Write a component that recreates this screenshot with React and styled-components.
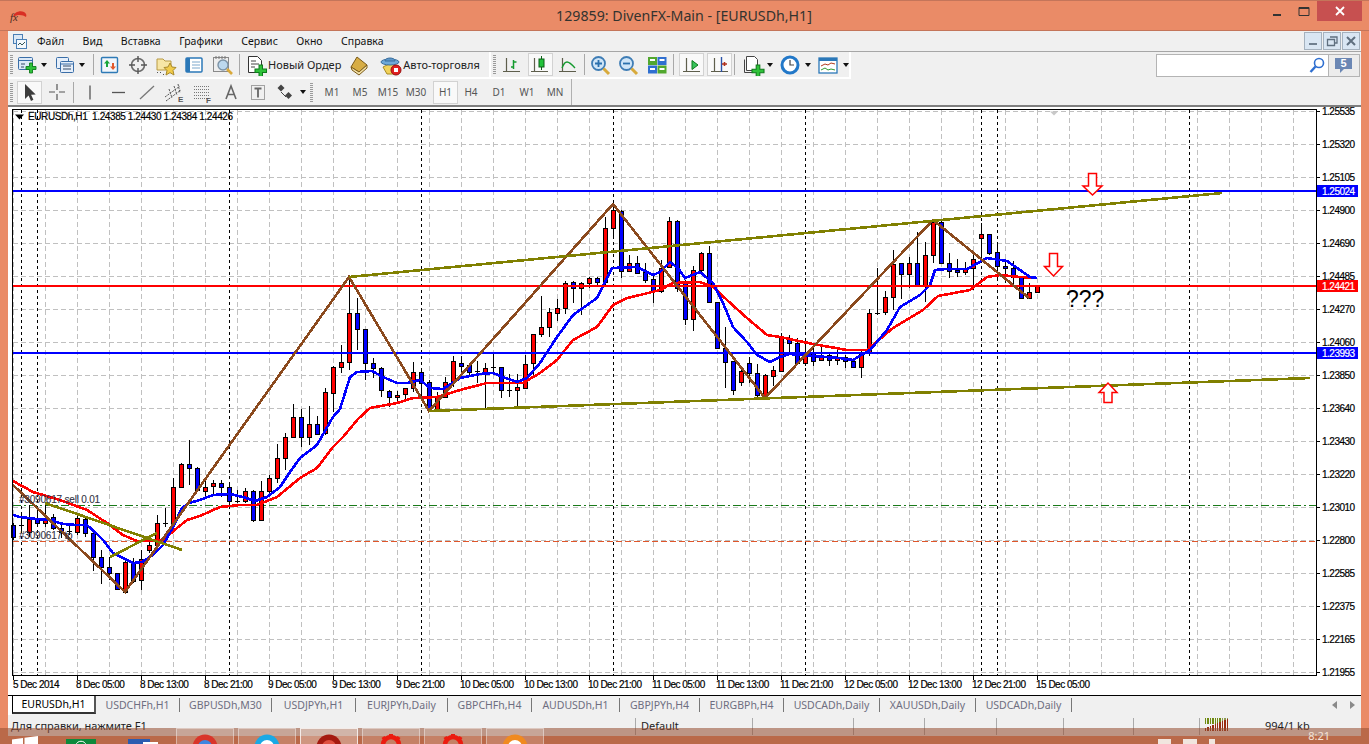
import React from "react";
import styled, { createGlobalStyle } from "styled-components";

const Global = createGlobalStyle`
  html, body { margin: 0; padding: 0; overflow: hidden; background: #ea8b67; }
  * { box-sizing: border-box; }
`;

const uiFont = `"Noto Sans", "Liberation Sans", sans-serif`;
const chartFont = `"Liberation Sans", Arial, sans-serif`;

// x, colour, body top, body bottom, high, low
const candles = [
  [13, "b", 525, 537, 523, 540], [21, "d", 525, 525, 515, 530], [29, "r", 519, 532, 505, 537], [37, "b", 519, 523, 510, 527],
  [45, "r", 518, 523, 503, 527], [53, "b", 517, 528, 514, 530], [61, "b", 528, 532, 522, 538], [69, "d", 531, 531, 525, 535],
  [77, "r", 518, 532, 515, 535], [85, "b", 519, 533, 516, 537], [93, "b", 533, 557, 530, 571], [101, "b", 557, 567, 550, 584],
  [109, "b", 567, 573, 557, 580], [117, "b", 573, 589, 573, 590], [125, "r", 562, 592, 560, 592], [133, "b", 562, 581, 558, 583],
  [141, "r", 559, 580, 550, 590], [149, "r", 545, 550, 540, 553], [157, "r", 523, 545, 515, 550], [165, "d", 523, 523, 508, 527],
  [173, "r", 487, 523, 478, 525], [181, "r", 464, 487, 463, 488], [189, "b", 464, 468, 440, 485], [197, "b", 468, 490, 467, 491],
  [205, "r", 487, 491, 480, 498], [213, "r", 483, 486, 480, 495], [221, "b", 483, 487, 480, 497], [229, "b", 487, 501, 485, 507],
  [237, "d", 501, 501, 490, 503], [245, "r", 491, 501, 488, 503], [253, "b", 491, 520, 490, 522], [261, "r", 491, 520, 481, 520],
  [269, "r", 478, 491, 475, 493], [277, "r", 458, 478, 444, 483], [285, "r", 437, 458, 433, 470], [293, "r", 417, 437, 404, 438],
  [301, "b", 417, 437, 409, 447], [309, "r", 424, 437, 406, 445], [317, "b", 424, 434, 416, 435], [325, "r", 392, 433, 388, 435],
  [333, "r", 367, 393, 366, 412], [341, "r", 362, 367, 345, 373], [349, "r", 313, 362, 277, 370], [357, "b", 313, 329, 298, 350],
  [365, "b", 329, 363, 329, 380], [373, "b", 363, 368, 358, 378], [381, "b", 368, 390, 367, 397], [389, "b", 391, 397, 390, 407],
  [397, "r", 395, 397, 391, 403], [405, "r", 388, 394, 388, 400], [413, "r", 372, 388, 362, 392], [421, "b", 372, 383, 368, 400],
  [429, "b", 382, 409, 380, 410], [437, "r", 396, 409, 392, 410], [445, "r", 382, 397, 377, 398], [453, "r", 361, 382, 356, 387],
  [461, "b", 363, 366, 356, 375], [469, "b", 365, 372, 363, 375], [477, "d", 371, 371, 361, 383], [485, "r", 368, 372, 363, 408],
  [493, "d", 367, 367, 354, 375], [501, "b", 367, 390, 367, 398], [509, "d", 390, 390, 374, 397], [517, "r", 387, 390, 374, 407],
  [525, "r", 364, 388, 355, 388], [533, "r", 334, 363, 334, 377], [541, "r", 327, 334, 296, 337], [549, "r", 312, 327, 308, 337],
  [557, "r", 308, 313, 299, 321], [565, "r", 283, 308, 281, 314], [573, "b", 282, 288, 281, 303], [581, "r", 283, 288, 282, 315],
  [589, "r", 278, 283, 277, 288], [597, "b", 278, 282, 277, 285], [605, "r", 228, 282, 217, 287], [613, "r", 210, 228, 205, 238],
  [621, "b", 211, 271, 210, 278], [629, "r", 263, 271, 255, 272], [637, "b", 263, 273, 256, 274], [645, "b", 272, 280, 263, 283],
  [653, "b", 279, 291, 275, 303], [661, "r", 268, 291, 260, 293], [669, "r", 221, 267, 217, 268], [677, "b", 221, 288, 220, 292],
  [685, "b", 283, 319, 280, 325], [693, "r", 270, 319, 266, 331], [701, "r", 253, 270, 252, 272], [709, "b", 253, 302, 246, 303],
  [717, "b", 302, 348, 302, 348], [725, "b", 348, 362, 327, 388], [733, "b", 361, 390, 361, 395], [741, "r", 371, 382, 370, 386],
  [749, "b", 363, 373, 357, 383], [757, "b", 373, 395, 364, 397], [765, "r", 375, 397, 374, 397], [773, "r", 370, 376, 366, 386],
  [781, "r", 337, 371, 333, 372], [789, "b", 339, 343, 335, 353], [797, "b", 343, 363, 338, 365], [805, "r", 353, 363, 343, 366],
  [813, "b", 353, 361, 347, 366], [821, "r", 357, 360, 347, 361], [829, "b", 355, 360, 354, 366], [837, "r", 357, 360, 350, 365],
  [845, "b", 357, 361, 355, 368], [853, "b", 361, 367, 358, 368], [861, "r", 353, 367, 350, 378], [869, "r", 313, 352, 309, 356],
  [877, "d", 313, 313, 268, 315], [885, "r", 297, 312, 291, 315], [893, "r", 264, 297, 250, 310], [901, "b", 263, 274, 263, 299],
  [909, "r", 263, 274, 257, 288], [917, "b", 263, 285, 232, 285], [925, "r", 255, 285, 242, 302], [933, "r", 222, 255, 220, 263],
  [941, "b", 222, 263, 221, 263], [949, "b", 263, 271, 253, 278], [957, "b", 270, 272, 259, 277], [965, "r", 268, 272, 262, 275],
  [973, "r", 259, 268, 253, 290], [981, "r", 234, 238, 223, 259], [989, "b", 234, 253, 234, 255], [997, "b", 252, 266, 245, 278],
  [1005, "b", 266, 268, 260, 283], [1013, "b", 268, 277, 261, 285], [1021, "b", 277, 298, 277, 298], [1029, "r", 292, 298, 283, 299],
  [1037, "r", 286, 292, 285, 293],
];

const blueMa = "13,515 20,517 37,519 50,520 63,524 77,525 87,525 97,534 103,540 113,553 123,558 133,563 142,562 153,555 163,545 173,527 182,508 189,503 200,500 213,495 230,494 243,497 255,501 267,497 280,487 290,472 300,458 317,445 333,417 340,409 350,377 357,372 372,371 383,377 397,383 407,383 420,380 430,388 443,389 460,378 480,374 493,373 503,377 517,382 527,378 540,363 557,337 573,315 597,298 612,268 637,267 653,275 660,272 670,262 678,268 685,278 700,272 713,283 723,303 733,327 747,342 757,355 770,362 780,357 790,354 813,356 840,358 853,360 870,350 887,330 900,307 920,295 930,285 935,270 947,269 967,269 987,258 1007,261 1020,270 1030,277 1037,278";
const redMa = "13,481 33,492 60,500 87,510 107,523 123,535 137,541 163,540 177,528 187,520 200,516 220,507 240,505 257,505 277,497 300,478 317,468 333,447 343,437 358,419 370,408 397,403 413,398 437,397 460,390 487,383 523,383 540,373 557,360 573,340 597,327 613,305 627,298 640,295 660,290 673,283 700,282 713,287 727,300 747,318 767,335 780,337 813,344 847,350 867,350 893,328 923,310 938,296 970,290 987,277 1000,275 1020,277 1037,278";
const zigzag = "13,485 125,592 349,277 429,411 613,204 765,398 933,220 1029,298";

const priceLabels = ["1.25535", "1.25320", "1.25105", "1.24900", "1.24690", "1.24485", "1.24270", "1.24060", "1.23850", "1.23640", "1.23430", "1.23220", "1.23010", "1.22800", "1.22585", "1.22375", "1.22165", "1.21955"];
const timeLabels = ["8 Dec 05:00", "8 Dec 13:00", "8 Dec 21:00", "9 Dec 05:00", "9 Dec 13:00", "9 Dec 21:00", "10 Dec 05:00", "10 Dec 13:00", "10 Dec 21:00", "11 Dec 05:00", "11 Dec 13:00", "11 Dec 21:00", "12 Dec 05:00", "12 Dec 13:00", "12 Dec 21:00", "15 Dec 05:00"];
const dayLines = [21, 37, 229, 421, 613, 805, 981, 997, 1189];
const gridX = Array.from({ length: 41 }, (_, i) => 13 + i * 32);

const tabs = [
  ["EURUSDh,H1", 84], ["USDCHFh,H1", 84], ["GBPUSDh,M30", 92], ["USDJPYh,H1", 84], ["EURJPYh,Daily", 92], ["GBPCHFh,H4", 84],
  ["AUDUSDh,H1", 88], ["GBPJPYh,H4", 80], ["EURGBPh,H4", 84], ["USDCADh,Daily", 96], ["XAUUSDh,Daily", 96], ["USDCADh,Daily", 96],
];
const menus = ["Файл", "Вид", "Вставка", "Графики", "Сервис", "Окно", "Справка"];
const frames = [["M1", 28], ["M5", 28], ["M15", 28], ["M30", 28], ["H1", 25, true], ["H4", 28], ["D1", 28], ["W1", 28], ["MN", 28]];

const Page = styled.div`
  position: relative;
  width: 1369px;
  height: 744px;
  overflow: hidden;
  background: #ea8b67;
  border-top: 1px solid #c4755a;
  font-family: ${uiFont};
`;

const TitleBar = styled.header`
  position: relative;
  display: flex;
  align-items: center;
  justify-content: center;
  height: 30px;
  border-bottom: 1px solid #c4755a;
`;

const AppLogo = styled.svg`
  position: absolute;
  left: 9px;
  top: 9px;
`;

const Title = styled.span`
  font-size: 14.2px;
  color: #33332f;
  margin-left: -1px;
`;

const WinControls = styled.div`
  position: absolute;
  right: 7px;
  top: 0;
  display: flex;
  height: 20px;
`;

const WinButton = styled.div`
  display: flex;
  align-items: center;
  justify-content: center;
  width: ${(p) => p.$w}px;
  height: 20px;
  background: ${(p) => (p.$close ? "#c75050" : "transparent")};
`;

const Window = styled.div`
  display: flex;
  flex-direction: column;
  width: 1353px;
  height: 705px;
  margin-left: 8px;
  background: #f0f0f0;
`;

const MenuBar = styled.nav`
  display: flex;
  align-items: center;
  height: 21px;
  padding: 0 1px 0 5px;
  border-bottom: 1px solid #a6a6a6;
`;

const MenuItems = styled.div`
  display: flex;
  gap: 18.5px;
  margin-left: 10px;
`;

const MenuItem = styled.span`
  font-size: 10.5px;
  color: #111;
`;

const MdiButtons = styled.div`
  display: flex;
  gap: 1px;
  margin-left: auto;
`;

const MdiButton = styled.div`
  display: flex;
  align-items: center;
  justify-content: center;
  width: 18px;
  height: 18px;
  background: #d9e6f3;
  border: 1px solid #a4b1be;
`;

const ToolRow = styled.div`
  display: flex;
  align-items: center;
  height: ${(p) => p.$h}px;
`;

const Band = styled.div`
  display: flex;
  align-items: center;
  height: 100%;
  padding-left: 2px;
  border-right: ${(p) => (p.$line ? "1px solid #b0b0b0" : "2px solid #fff")};
  border-bottom: ${(p) => (p.$line ? "none" : "2px solid #fff")};
  width: ${(p) => p.$w}px;
`;

const Grip = styled.i`
  display: block;
  flex: none;
  width: 3px;
  height: 19px;
  margin: 0 ${(p) => p.$mr ?? 2}px 0 ${(p) => p.$ml ?? 0}px;
  background: repeating-linear-gradient(to bottom, #9a9a9a 0 1px, transparent 1px 2px);
`;

const Slot = styled.div`
  display: flex;
  flex: none;
  align-items: center;
  justify-content: center;
  width: ${(p) => p.$w ?? 28}px;
  height: ${(p) => (p.$on ? 23 : 24)}px;
  margin-left: ${(p) => p.$ml ?? 0}px;
  margin-right: ${(p) => p.$mr ?? 0}px;
  ${(p) => p.$on && "background: #f9f9f9; border: 1px solid #d2d2d2;"}
`;

const Caret = styled.i`
  display: block;
  flex: none;
  width: 0;
  height: 0;
  margin: 0 1px 0 2px;
  border-left: 3.5px solid transparent;
  border-right: 3.5px solid transparent;
  border-top: 4px solid #111;
`;

const Sep = styled.i`
  display: block;
  flex: none;
  width: 1px;
  height: 21px;
  margin: 0 ${(p) => p.$mr ?? 2}px 0 ${(p) => p.$ml ?? 2}px;
  background: #a8a8a8;
`;

const ToolText = styled.span`
  flex: none;
  font-size: 11px;
  color: #222;
  margin-right: ${(p) => p.$mr ?? 0}px;
`;

const Frame = styled.span`
  font-size: 10px;
  color: #555;
`;

const SearchBox = styled.div`
  display: flex;
  align-items: center;
  justify-content: flex-end;
  width: 173px;
  height: 23px;
  margin-left: auto;
  padding-right: 3px;
  background: #fff;
  border: 1px solid #b4b4b4;
`;

const ChatButton = styled.div`
  display: flex;
  align-items: center;
  justify-content: center;
  width: 31px;
  height: 23px;
  margin-right: 1px;
  background: #ececec;
  border: 1px solid #b4b4b4;
  border-left: none;
`;

const ChartWrap = styled.div`
  height: 590px;
  background: #fff;
  border-top: 2px solid #7e7e7e;
`;

const Chart = styled.svg`
  display: block;
`;

const AxisText = styled.text`
  font-family: ${chartFont};
  font-size: 10px;
  letter-spacing: -0.5px;
  fill: #000;
  stroke: #000;
  stroke-width: 0.2px;
  white-space: pre;
`;

const InfoText = styled(AxisText)`
  letter-spacing: -0.4px;
`;

const TagText = styled(AxisText)`
  fill: #fff;
  stroke: #fff;
`;

const OrderText = styled(AxisText)`
  letter-spacing: -0.2px;
  fill: #334;
  stroke: #334;
  stroke-width: 0.1px;
`;

const BigText = styled.text`
  font-family: ${chartFont};
  font-size: 23px;
  fill: #000;
`;

const TabStrip = styled.div`
  position: relative;
  display: flex;
  height: 20px;
  padding-left: 4px;
  border-top: 1px solid #000;
  background: #f0f0f0;
  box-shadow: inset 4px 0 0 #fff;
`;

const Tab = styled.div`
  display: flex;
  flex: none;
  align-items: center;
  justify-content: center;
  width: ${(p) => p.$w}px;
  height: ${(p) => (p.$on ? "18px" : "14px")};
  margin-top: ${(p) => (p.$on ? 0 : 2)}px;
  font-size: 10.5px;
  color: ${(p) => (p.$on ? "#000" : "#6e6e80")};
  background: ${(p) => (p.$on ? "#fff" : "transparent")};
  border-left: ${(p) => (p.$on ? "1px solid #000" : "none")};
  border-right: ${(p) => (p.$on ? "2px solid #555" : "1px solid #777")};
  border-bottom: ${(p) => (p.$on ? "2px solid #333" : "none")};
`;

const TabArrows = styled.div`
  display: flex;
  gap: 11px;
  margin-left: auto;
  padding: 5px 6px 0 0;
`;

const StatusBar = styled.footer`
  position: relative;
  display: flex;
  height: 21px;
  padding-top: 3px;
  font-size: 11px;
  color: #222;
`;

const StatusCell = styled.div`
  flex: none;
  width: ${(p) => p.$w}px;
  height: 17px;
  padding-left: ${(p) => p.$pad ?? 0}px;
  border-left: ${(p) => (p.$first ? "none" : "1px solid #aaa")};
  white-space: nowrap;
`;

const Taskbar = styled.div`
  position: absolute;
  left: 0;
  right: 0;
  bottom: 0;
  display: flex;
  height: 16px;
  overflow: hidden;
  background: rgba(149, 80, 51, 0.57);
`;

const TaskIcon = styled.div`
  flex: none;
  width: ${(p) => p.$w}px;
  padding-top: ${(p) => p.$top ?? 0}px;
  margin-left: ${(p) => p.$ml}px;
`;

const TaskButton = styled.div`
  display: flex;
  flex: none;
  justify-content: center;
  width: 58px;
  height: 18px;
  margin-left: ${(p) => p.$ml ?? 4}px;
  padding-top: 5px;
  background: ${(p) => (p.$on ? "rgba(255,255,255,0.3)" : "rgba(255,255,255,0.16)")};
  border: 1px solid ${(p) => (p.$on ? "rgba(255,255,255,0.75)" : "rgba(255,255,255,0.4)")};
`;

const Clock = styled.span`
  position: absolute;
  right: 39px;
  top: 0;
  font-size: 11px;
  line-height: 15px;
  color: #f4e3d8;
`;

const Tray = styled.div`
  position: absolute;
  left: 1158px;
  top: 11px;
  display: flex;
  gap: 12px;
`;

const TrayDot = styled.i`
  display: block;
  width: ${(p) => p.$w}px;
  height: 6px;
  background: #f1e6df;
`;

// --- toolbar drawings

const Ico = ({ w = 22, h = 22, children }) => (
  <svg width={w} height={h} viewBox={`0 0 ${w} ${h}`}>
    {children}
  </svg>
);

const GreenPlus = ({ x, y, s = 1 }) => (
  <path
    transform={`translate(${x} ${y}) scale(${s})`}
    d="M3.5 0h3v3.5H10v3H6.5V10h-3V6.5H0v-3h3.5z"
    fill="#2fc23a"
    stroke="#0f7a1c"
    strokeWidth="0.9"
  />
);

const NewChartIcon = () => (
  <Ico>
    <rect x="2.5" y="3.5" width="14" height="12" rx="1" fill="#dce9f7" stroke="#3a6ea8" />
    <path d="M2.5 6.5h14" stroke="#3a6ea8" />
    <path d="M5 10h4M5 13h3" stroke="#354a66" />
    <GreenPlus x={10} y={9} />
  </Ico>
);

const ProfilesIcon = () => (
  <Ico>
    <rect x="2.5" y="3.5" width="12" height="11" rx="1" fill="#e6effa" stroke="#3a6ea8" />
    <rect x="6.5" y="7.5" width="13" height="11" rx="1" fill="#e6effa" stroke="#3a6ea8" />
    <path d="M9 12h8M9 15h8" stroke="#354a66" />
    <path d="M6.5 10h13" stroke="#3a6ea8" />
  </Ico>
);

const WatchIcon = () => (
  <Ico>
    <rect x="2.5" y="3.5" width="16" height="15" rx="1" fill="#f1f6fb" stroke="#2e7ab6" strokeWidth="1.4" />
    <path d="M8 6l-3 3.5h2V13h2V9.5h2z" fill="#17a63a" />
    <path d="M13 16l3-3.5h-2V9h-2v3.5h-2z" transform="translate(1 0)" fill="#e2592c" />
  </Ico>
);

const TargetIcon = () => (
  <Ico>
    <circle cx="11" cy="11" r="6.5" fill="none" stroke="#6b6b6b" strokeWidth="1.6" />
    <path d="M11 2v6M11 14v6M2 11h6M14 11h6" stroke="#555" strokeWidth="1.4" />
  </Ico>
);

const FavIcon = () => (
  <Ico w={24}>
    <path d="M3 5h6l2 2h6v9H3z" fill="#f7e6a5" stroke="#b89a45" />
    <path d="M16 9l2 4 4 .5-3 3 1 4.5-4-2.4-4 2.4 1-4.5-3-3 4-.5z" fill="#f1cb4a" stroke="#a98a2a" />
    <path d="M3 18.5h1M6 18.5h1M9 20.5h1" stroke="#555" />
  </Ico>
);

const TerminalIcon = () => (
  <Ico>
    <rect x="3" y="4" width="16" height="14" rx="1" fill="#fff" stroke="#2b78b8" strokeWidth="1.5" />
    <rect x="3" y="4" width="4" height="14" fill="#2b78b8" />
    <path d="M9 8h8M9 11h8M9 14h8" stroke="#7ba7cc" />
  </Ico>
);

const TesterIcon = () => (
  <Ico w={24}>
    <rect x="2.5" y="3.5" width="15" height="14" fill="#eeeeee" stroke="#8a8a8a" />
    <path d="M5 2v3M8 2v3M11 2v3M14 2v3" stroke="#777" />
    <circle cx="12" cy="11" r="5" fill="#bcd8ee" stroke="#7d93a6" strokeWidth="1.4" />
    <path d="M16 15l5 5" stroke="#d9a93a" strokeWidth="2.6" />
  </Ico>
);

const OrderIcon = () => (
  <Ico w={24}>
    <path d="M4.5 2.5h9l4 4v12h-13z" fill="#fff" stroke="#333" />
    <path d="M7 7h5M7 10h8M7 13h4" stroke="#444" />
    <GreenPlus x={11} y={11} s={1.15} />
  </Ico>
);

const BookIcon = () => (
  <Ico>
    <path d="M9 3l10 8-8 7-8-5z" fill="#d7ad45" stroke="#7b5b1a" />
    <path d="M3 13l1 3 7 5 8-7v-3l-8 7z" fill="#f4e2a8" stroke="#7b5b1a" />
  </Ico>
);

const AutoIcon = () => (
  <Ico w={24}>
    <path d="M4 13l8 -4 7 4v7H8z" fill="#f2d25a" stroke="#a78a22" />
    <ellipse cx="11" cy="8" rx="9" ry="3" fill="#6fa9d8" stroke="#3b6f9e" />
    <path d="M6 7c0-4 10-4 10 0z" fill="#5d97c9" stroke="#3b6f9e" />
    <circle cx="17" cy="16" r="5" fill="#e02020" stroke="#9a1010" />
    <rect x="15" y="14" width="4" height="4" fill="#fff" />
  </Ico>
);

const Axes = () => <path d="M5.5 4v14M2 17.5h17" stroke="#5e5e4c" strokeWidth="1.2" fill="none" />;

const BarsIcon = () => (
  <Ico>
    <Axes />
    <path d="M12.5 6v9M10 13h2.5M12.5 8h3" stroke="#139a2e" strokeWidth="1.5" fill="none" />
  </Ico>
);

const CandleIcon = () => (
  <Ico>
    <Axes />
    <path d="M12.5 2v14" stroke="#0b5f16" />
    <rect x="10" y="5" width="5" height="8" fill="#21c23a" stroke="#0b5f16" />
  </Ico>
);

const LineIcon = () => (
  <Ico>
    <Axes />
    <path d="M5 14c3-8 6-8 13 0" stroke="#139a2e" strokeWidth="1.3" fill="none" />
  </Ico>
);

const ZoomIcon = ({ plus }) => (
  <Ico w={24}>
    <circle cx="9.5" cy="9.5" r="6.5" fill="#cfe5f7" stroke="#3f7db5" strokeWidth="1.8" />
    <path d={plus ? "M6 9.5h7M9.5 6v7" : "M6 9.5h7"} stroke="#2a70ad" strokeWidth="1.8" />
    <path d="M14.5 14.5l5.5 5.5" stroke="#d8aa3c" strokeWidth="3" />
  </Ico>
);

const TileIcon = () => (
  <Ico w={24}>
    <rect x="3" y="3" width="9" height="8" fill="#52a82f" />
    <rect x="12.5" y="3" width="9" height="8" fill="#2f6fd0" />
    <rect x="3" y="11.5" width="9" height="8" fill="#2f6fd0" />
    <rect x="12.5" y="11.5" width="9" height="8" fill="#52a82f" />
    <path d="M5 6h5M14.5 6h5M5 15h5M14.5 15h5" stroke="#fff" strokeWidth="2" />
  </Ico>
);

const ScrollIcon = () => (
  <Ico>
    <Axes />
    <path d="M11 6.5l6 4.5-6 4.5z" fill="#37c35a" stroke="#0f7a1c" />
  </Ico>
);

const ShiftIcon = () => (
  <Ico>
    <Axes />
    <path d="M12.5 3v15" stroke="#2a52a8" strokeWidth="1.4" />
    <path d="M13 10h5M15.5 8v4" stroke="#b0301c" strokeWidth="1.6" />
  </Ico>
);

const AddPeriodIcon = () => (
  <Ico w={24}>
    <path d="M5.5 2.5h8l3 3v11h-11z" fill="#fff" stroke="#444" />
    <path d="M3.5 5.5v13h9" fill="none" stroke="#444" />
    <GreenPlus x={11} y={11} s={1.2} />
  </Ico>
);

const ClockIcon = () => (
  <Ico w={24}>
    <circle cx="11" cy="11" r="8" fill="#fff" stroke="#2278c8" strokeWidth="3" />
    <path d="M11 6v5h4" stroke="#444" strokeWidth="1.2" fill="none" />
  </Ico>
);

const TemplateIcon = () => (
  <Ico w={24}>
    <rect x="2" y="4" width="18" height="15" fill="#fff" stroke="#2b78b8" strokeWidth="1.3" />
    <rect x="2" y="4" width="18" height="3" fill="#2b78b8" />
    <path d="M4 12l4-2 3 1 3-2 4 1" stroke="#b03a1c" fill="none" />
    <path d="M4 16l4-2 3 2 3-1 4 1" stroke="#2f9a2f" fill="none" />
  </Ico>
);

const CursorIcon = () => (
  <Ico>
    <path d="M6 3v15l3.6-3.4L12 20l2.4-1.2-2.3-5 4.6-.3z" fill="#3c3c3c" />
  </Ico>
);

const CrossIcon = () => (
  <Ico>
    <path d="M11 3v6M11 13v6M3 11h6M13 11h6" stroke="#555" strokeWidth="1.2" />
  </Ico>
);

const VLineIcon = () => (
  <Ico>
    <path d="M11 4.5v14" stroke="#555" strokeWidth="1.3" />
  </Ico>
);

const HLineIcon = () => (
  <Ico>
    <path d="M4 11.5h13" stroke="#555" strokeWidth="1.3" />
  </Ico>
);

const TrendIcon = () => (
  <Ico>
    <path d="M4 18L18 5" stroke="#777" strokeWidth="1.3" />
  </Ico>
);

const Mini = styled.text`
  font-family: ${chartFont};
  font-size: 8px;
  font-weight: 700;
  fill: #555;
`;

const ChannelIcon = () => (
  <Ico w={24} h={24}>
    <path d="M2 17L17 6M3 21L18 10M6 9l3 9M11 6l3 9M15 4l2 9" stroke="#555" strokeWidth="1" strokeDasharray="2 1" />
    <Mini x="15" y="22">E</Mini>
  </Ico>
);

const FiboIcon = () => (
  <Ico w={24} h={24}>
    <path d="M3 6.5h15M3 9.5h15M3 12.5h15M3 15.5h15M3 18.5h15" stroke="#777" strokeDasharray="1 1" />
    <Mini x="15" y="23">F</Mini>
  </Ico>
);

const TextIcon = () => (
  <Ico>
    <path d="M6 18L11 5l5 13M8 13.5h6" stroke="#666" strokeWidth="1.6" fill="none" />
  </Ico>
);

const LabelIcon = () => (
  <Ico>
    <rect x="4.5" y="4.5" width="13" height="14" fill="none" stroke="#555" strokeDasharray="1 1" />
    <path d="M7.5 7.5h7M11 7.5v9" stroke="#666" strokeWidth="1.8" />
  </Ico>
);

const ArrowsIcon = () => (
  <Ico>
    <path d="M7 3.5l3.5 3.5-3.5 3.5L3.5 7z" fill="#444" />
    <path d="M14.5 11l3.5 3.5-3.5 3.5-3.5-3.5z" fill="#444" />
    <path d="M7 11l5 5" stroke="#444" />
  </Ico>
);

const WinLogo = () => (
  <svg width="26" height="14" viewBox="0 0 26 14">
    <path d="M0 3.5L11 2v12H0zM12.5 1.8L26 0v14H12.5z" fill="#fff" />
  </svg>
);

const GearIcon = () => (
  <svg width="22" height="14" viewBox="0 0 22 14">
    <circle cx="11" cy="11" r="8" fill="none" stroke="#ec1c10" strokeWidth="4.5" />
    <path d="M9 0h4v4H9zM1.5 4l3-2 2.5 3-3 2zM20.5 4l-3-2-2.5 3 3 2z" fill="#ec1c10" />
  </svg>
);

const OrbIcon = ({ a, b }) => (
  <svg width="26" height="14" viewBox="0 0 26 14">
    <circle cx="13" cy="13" r="12.5" fill={a} />
    <circle cx="13" cy="13" r="7" fill={b} />
  </svg>
);

// --- chart pieces

const GridLines = () => (
  <g stroke="#c0c0c0" strokeDasharray="5 3" shapeRendering="crispEdges">
    {priceLabels.map((_, i) => (
      <line key={i} x1="13" x2="1316" y1={111.5 + i * 33} y2={111.5 + i * 33} />
    ))}
    {gridX.map((x) => (
      <line key={x} x1={x + 0.5} x2={x + 0.5} y1="110" y2="675" />
    ))}
  </g>
);

const Candles = () => (
  <g shapeRendering="crispEdges">
    {candles.map(([x, c, top, bot, hi, lo]) => (
      <g key={x}>
        <rect x={x} y={hi} width="1" height={lo - hi} fill="#000" />
        {c === "d" ? (
          <rect x={x - 2} y={top} width="5" height="1" fill="#000" />
        ) : (
          <rect x={x - 1.5} y={top + 0.5} width="4" height={bot - top} fill={c === "r" ? "#f00" : "#00f"} stroke="#000" />
        )}
      </g>
    ))}
  </g>
);

const PriceTag = ({ y, fill, children }) => (
  <g>
    <rect x="1317" y={y - 6} width="41" height="12" fill={fill} />
    <TagText x="1322" y={y + 4}>{children}</TagText>
  </g>
);

const Arrow = ({ d }) => <path d={d} fill="#fff" stroke="#f00" strokeWidth="1.5" />;

const ChartView = () => (
  <Chart width="1353" height="588" viewBox="8 107 1353 588">
    <GridLines />
    <g stroke="#000" strokeDasharray="3 3" shapeRendering="crispEdges">
      {dayLines.map((x) => (
        <line key={x} x1={x + 0.5} x2={x + 0.5} y1="110" y2="675" />
      ))}
    </g>
    <g shapeRendering="crispEdges">
      <line x1="13" x2="1316" y1="505.5" y2="505.5" stroke="#1a7a1a" strokeDasharray="8 3 2 3" />
      <line x1="13" x2="1316" y1="541.5" y2="541.5" stroke="#e0562a" strokeDasharray="6 3" />
    </g>
    <Candles />
    <g fill="none" strokeWidth="2.6" shapeRendering="crispEdges">
      <polyline points={redMa} stroke="#f00" />
      <polyline points={blueMa} stroke="#00f" />
    </g>
    <g shapeRendering="crispEdges">
      <rect x="13" y="190" width="1303" height="2" fill="#00f" />
      <rect x="13" y="285" width="1303" height="2" fill="#f00" />
      <rect x="13" y="352" width="1303" height="2" fill="#00f" />
    </g>
    <g fill="none" strokeWidth="2.6" shapeRendering="crispEdges">
      <polyline points={zigzag} stroke="#8b4a1e" />
      <path d="M349 277L1222 193M429 411L1310 378M45 503L182 550M110 557L157 533" stroke="#808000" />
    </g>
    <Arrow d="M1088.5 173.5h8V186h5.5l-9.5 9-9.500-9h5.500z" />
    <Arrow d="M1049.5 253.5h8v13h5l-9 9.500-9-9.500h5z" />
    <Arrow d="M1104 402.5v-10h-5l9-9.500 9 9.500h-5v10z" />
    <BigText x="1066" y="307">???</BigText>
    <OrderText x="19" y="503">#3090617 sell 0.01</OrderText>
    <OrderText x="19" y="539">#3090617 tp</OrderText>
    <path d="M1050 111.5h8l-4 4z" fill="#c8c8c8" />
    <path d="M15 114.5h9l-4.500 5z" fill="#000" />
    <InfoText x="28" y="120">{"EURUSDh,H1  1.24385 1.24430 1.24384 1.24426"}</InfoText>
    <rect x="12.5" y="109.5" width="1304" height="566" fill="none" stroke="#000" shapeRendering="crispEdges" />
    {priceLabels.map((t, i) => (
      <g key={t}>
        <rect x="1317" y={111 + i * 33} width="3" height="1" fill="#000" />
        <AxisText x="1322" y={115 + i * 33}>{t}</AxisText>
      </g>
    ))}
    <PriceTag y={191} fill="#00f">1.25024</PriceTag>
    <PriceTag y={286} fill="#f00">1.24421</PriceTag>
    <PriceTag y={353} fill="#00f">1.23993</PriceTag>
    <AxisText x="13" y="688">5 Dec 2014</AxisText>
    <rect x="13" y="675" width="1" height="5" fill="#000" />
    {timeLabels.map((t, i) => (
      <g key={t}>
        <rect x={77 + i * 64} y="675" width="1" height="5" fill="#000" />
        <AxisText x={76 + i * 64} y="688">{t}</AxisText>
      </g>
    ))}
  </Chart>
);

const Signal = () => (
  <svg width="24" height="13" viewBox="0 0 24 13">
    {Array.from({ length: 10 }, (_, i) => (
      <g key={i} shapeRendering="crispEdges">
        <rect x={i * 2.4} y={0} width="1.4" height={6} fill={i < 7 ? "#6f8a10" : "#8f9a50"} />
        <rect x={i * 2.4} y={10 - i} width="1.4" height={3 + i} fill="#9a2a10" />
      </g>
    ))}
  </svg>
);

export default function App() {
  return (
    <Page>
      <Global />
      <TitleBar>
        <AppLogo width="18" height="14" viewBox="0 0 18 14">
          <path d="M4 7C5 2 11 0 15 2c2 1 3 3 2 5-3-2-8-3-13 0z" fill="#d92f24" />
          <text x="1" y="11" fontFamily={`"Liberation Serif", serif`} fontStyle="italic" fontSize="11" fill="#4a2a20">fx</text>
        </AppLogo>
        <Title>129859: DivenFX-Main - [EURUSDh,H1]</Title>
        <WinControls>
          <WinButton $w={27}>
            <svg width="10" height="10" viewBox="0 0 10 10"><path d="M1 8h8v2H1z" fill="#333" /></svg>
          </WinButton>
          <WinButton $w={27}>
            <svg width="12" height="10" viewBox="0 0 12 10"><path d="M1 1.5h10v8H1z" fill="none" stroke="#333" /><path d="M1 1h10v2H1z" fill="#333" /></svg>
          </WinButton>
          <WinButton $w={45} $close>
            <svg width="10" height="10" viewBox="0 0 10 10"><path d="M1 1l8 8M9 1l-8 8" stroke="#fff" strokeWidth="1.8" /></svg>
          </WinButton>
        </WinControls>
      </TitleBar>

      <Window>
        <MenuBar>
          <svg width="14" height="15" viewBox="0 0 14 15">
            <rect x="0.5" y="0.5" width="9" height="9" fill="#dbe8f5" stroke="#4a7fb5" />
            <rect x="3.5" y="5.5" width="10" height="9" fill="#f4f8fc" stroke="#4a7fb5" />
            <path d="M5 11l2-2 2 2 3-3" stroke="#355" fill="none" />
          </svg>
          <MenuItems>
            {menus.map((m) => (
              <MenuItem key={m}>{m}</MenuItem>
            ))}
          </MenuItems>
          <MdiButtons>
            <MdiButton>
              <svg width="12" height="12" viewBox="0 0 12 12"><path d="M2 8h8v2H2z" fill="#6f7f8f" /></svg>
            </MdiButton>
            <MdiButton>
              <svg width="12" height="12" viewBox="0 0 12 12"><path d="M1.5 4.5h7v6h-7zM4 2h7v6h-2" fill="none" stroke="#5f6f7f" strokeWidth="1.3" /></svg>
            </MdiButton>
            <MdiButton>
              <svg width="12" height="12" viewBox="0 0 12 12"><path d="M2 2l8 8M10 2l-8 8" stroke="#5f6f7f" strokeWidth="2" /></svg>
            </MdiButton>
          </MdiButtons>
        </MenuBar>

        <ToolRow $h={27}>
          <Band $w={483}>
            <Grip />
            <Slot $w={24}><NewChartIcon /></Slot>
            <Caret />
            <Slot $w={24} $ml={5}><ProfilesIcon /></Slot>
            <Caret />
            <Sep $ml={7} />
            <Slot><WatchIcon /></Slot>
            <Slot><TargetIcon /></Slot>
            <Slot><FavIcon /></Slot>
            <Slot><TerminalIcon /></Slot>
            <Slot $w={29}><TesterIcon /></Slot>
            <Sep />
            <Slot $w={24} $ml={2}><OrderIcon /></Slot>
            <ToolText $mr={6}>Новый Ордер</ToolText>
            <Slot $w={24}><BookIcon /></Slot>
            <Slot $w={24} $ml={8}><AutoIcon /></Slot>
            <ToolText>Авто-торговля</ToolText>
          </Band>
          <Band $w={360}>
            <Grip />
            <Slot><BarsIcon /></Slot>
            <Slot $w={25} $ml={1.5} $mr={1.5} $on><CandleIcon /></Slot>
            <Slot><LineIcon /></Slot>
            <Sep />
            <Slot><ZoomIcon plus /></Slot>
            <Slot><ZoomIcon /></Slot>
            <Slot><TileIcon /></Slot>
            <Sep />
            <Slot $w={25} $ml={3} $on><ScrollIcon /></Slot>
            <Slot $w={25} $ml={3} $on><ShiftIcon /></Slot>
            <Sep />
            <Slot $w={24} $ml={4}><AddPeriodIcon /></Slot>
            <Caret />
            <Slot $w={24} $ml={5}><ClockIcon /></Slot>
            <Caret />
            <Slot $w={24} $ml={5}><TemplateIcon /></Slot>
            <Caret />
          </Band>
          <SearchBox>
            <svg width="16" height="17" viewBox="0 0 16 17">
              <circle cx="10" cy="6" r="4.5" fill="#fff" stroke="#2f6fd0" strokeWidth="1.6" />
              <path d="M6.5 9.5L1.5 15" stroke="#2f6fd0" strokeWidth="2.4" />
            </svg>
          </SearchBox>
          <ChatButton>
            <svg width="18" height="18" viewBox="0 0 18 18">
              <path d="M0 1h17v11H9l-4 4v-4H0z" fill="#6b87b4" />
              <text x="8.5" y="10" textAnchor="middle" fontFamily={chartFont} fontSize="11" fontWeight="700" fill="#fff">5</text>
            </svg>
          </ChatButton>
        </ToolRow>

        <ToolRow $h={26}>
          <Band $w={564} $line>
            <Grip $mr={4} />
            <Slot $w={25} $on><CursorIcon /></Slot>
            <Slot $ml={1}><CrossIcon /></Slot>
            <Sep />
            <Slot><VLineIcon /></Slot>
            <Slot $ml={1}><HLineIcon /></Slot>
            <Slot><TrendIcon /></Slot>
            <Slot><ChannelIcon /></Slot>
            <Slot><FiboIcon /></Slot>
            <Slot $w={27}><TextIcon /></Slot>
            <Slot><LabelIcon /></Slot>
            <Slot $w={26}><ArrowsIcon /></Slot>
            <Caret />
            <Grip $ml={3} $mr={5} />
            {frames.map(([f, w, on]) => (
              <Slot key={f} $w={w} $on={on} $ml={on ? 3 : 0} $mr={on ? -1 : 0}>
                <Frame>{f}</Frame>
              </Slot>
            ))}
          </Band>
        </ToolRow>

        <ChartWrap>
          <ChartView />
        </ChartWrap>

        <TabStrip>
          {tabs.map(([t, w], i) => (
            <Tab key={i} $w={w} $on={i === 0}>{t}</Tab>
          ))}
          <TabArrows>
            <svg width="6" height="8" viewBox="0 0 6 8"><path d="M5 0v8L0 4z" fill="#8a8a8a" /></svg>
            <svg width="6" height="8" viewBox="0 0 6 8"><path d="M1 0v8l5-4z" fill="#8a8a8a" /></svg>
          </TabArrows>
        </TabStrip>

        <StatusBar>
          <StatusCell $w={627} $pad={3} $first>Для справки, нажмите F1</StatusCell>
          <StatusCell $w={117} $pad={5}>Default</StatusCell>
          <StatusCell $w={101} />
          <StatusCell $w={71} />
          <StatusCell $w={72} />
          <StatusCell $w={67} />
          <StatusCell $w={70} />
          <StatusCell $w={66} />
          <StatusCell $w={66} $pad={5}><Signal /></StatusCell>
          <StatusCell $w={90} $first>994/1 kb</StatusCell>
        </StatusBar>
      </Window>

      <Taskbar>
        <TaskIcon $w={26} $ml={12} $top={5}><WinLogo /></TaskIcon>
        <TaskIcon $w={30} $ml={28} $top={5}>
          <svg width="30" height="11" viewBox="0 0 30 11"><rect width="30" height="11" fill="#0c8a3c" /><path d="M10 6c1-5 9-5 10 0" stroke="#fff" fill="none" /></svg>
        </TaskIcon>
        <TaskIcon $w={30} $ml={32} $top={5}>
          <svg width="30" height="11" viewBox="0 0 30 11"><rect width="22" height="11" fill="#2b5cb0" /><rect x="15" y="3" width="15" height="8" fill="#fff" /><path d="M18 6h9" stroke="#2b5cb0" /></svg>
        </TaskIcon>
        <TaskButton $ml={18}><OrbIcon a="#d9352a" b="#3f86e0" /></TaskButton>
        <TaskButton><OrbIcon a="#19a9e5" b="#fff" /></TaskButton>
        <TaskButton $on><OrbIcon a="#a51a10" b="#e05040" /></TaskButton>
        <TaskButton><GearIcon /></TaskButton>
        <TaskButton><GearIcon /></TaskButton>
        <TaskButton><OrbIcon a="#f08a20" b="#fff" /></TaskButton>
        <Tray>
          <TrayDot $w={13} />
          <TrayDot $w={14} />
          <TrayDot $w={6} />
        </Tray>
        <Clock>8:21</Clock>
      </Taskbar>
    </Page>
  );
}
